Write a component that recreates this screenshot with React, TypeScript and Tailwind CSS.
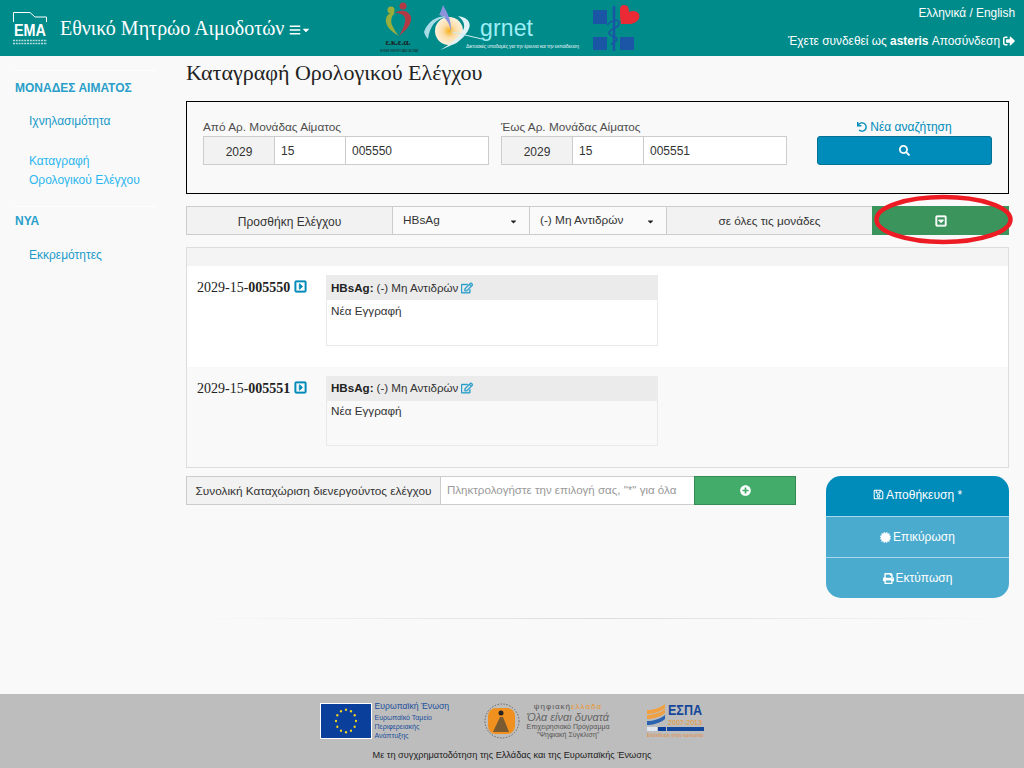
import { ReactNode } from "react";
import {
  FaBars,
  FaCaretDown,
  FaCertificate,
  FaPlusCircle,
  FaPrint,
  FaRegCaretSquareDown,
  FaRegCaretSquareRight,
  FaRegEdit,
  FaRegSave,
  FaSearch,
  FaSignOutAlt,
  FaUndo,
} from "react-icons/fa";

const EmaLogo = () => (
  <svg width="34" height="33" viewBox="0 0 34 33" className="shrink-0 overflow-visible">
    <path d="M0.500 10V0.500H17l5 4.500h11.500v5" fill="none" stroke="#fff" strokeWidth="1" />
    <text x="1" y="23.500" fontFamily="Liberation Sans" fontWeight="700" fontSize="16" fill="#fff" textLength="32" lengthAdjust="spacingAndGlyphs">
      EMA
    </text>
    <path d="M0 28.500h34M0 31.500h34" stroke="#d5ebeb" strokeWidth="1.500" strokeDasharray="2 0.800" opacity="0.85" />
  </svg>
);

const EkeaLogo = () => (
  <svg width="40" height="54" viewBox="0 0 40 54" className="shrink-0">
    <circle cx="11" cy="9" r="3.500" fill="#9aae3b" />
    <circle cx="23" cy="5" r="3.500" fill="#b23a45" />
    <path d="M19 35C10 30 5 24 6 18c1-5 5-7 9-6-4 3-5 9-2 14 2 4 4 7 6 9z" fill="#9aae3b" />
    <path d="M15 12c5-4 14-3 16 4 1 8-6 14-12 19 4-7 7-13 6-18-1-4-6-5-10-5z" fill="#b23a45" />
    <text x="18" y="44" textAnchor="middle" fontFamily="Liberation Serif" fontWeight="700" fontSize="9" fill="#1c1c1c" textLength="25">
      ε.κ.ε.α.
    </text>
    <text x="0" y="50.500" fontFamily="Liberation Sans" fontSize="4" fill="#1c3c3c" textLength="39">
      ΕΘΝΙΚΟ ΚΕΝΤΡΟ ΑΙΜΟΔΟΣΙΑΣ
    </text>
  </svg>
);

const GrnetLogo = () => (
  <svg width="158" height="50" viewBox="0 0 158 50" className="shrink-0">
    <defs>
      <radialGradient id="sun">
        <stop offset="0" stopColor="#f7b21e" />
        <stop offset="0.45" stopColor="#fbdca6" />
        <stop offset="1" stopColor="#fdf0dc" />
      </radialGradient>
    </defs>
    <circle cx="25" cy="28" r="14" fill="url(#sun)" />
    <path d="M19 2c3 6 9 14 8 27-1-10-7-16-12-17 2-3 3-7 4-10z" fill="#8b93dd" />
    <path d="M0 29c4-12 16-17 22-15C12 16 6 22 4 36 2 34 1 32 0 29z" fill="#a9dbe6" />
    <path d="M34 13c13 2 15 10 7 19-4 6-14 11-25 15 11-6 21-14 24-22 1-5-2-9-6-12z" fill="#dff2f5" />
    <path d="M28 29l30 7" stroke="#cdeaf0" strokeWidth="1" />
    <text x="56" y="33" fontFamily="Liberation Sans" fontSize="23" fill="#9eeef5" textLength="53">
      grnet
    </text>
    <text x="42" y="45" fontFamily="Liberation Sans" fontSize="5" fill="#e4f4f4" textLength="113">
      Δικτυακές υποδομές για την έρευνα και την εκπαίδευση
    </text>
  </svg>
);

const MinistryLogo = () => (
  <svg width="47" height="48" viewBox="0 0 47 48" className="shrink-0">
    <rect x="0" y="6" width="14" height="14" fill="#1a55a6" />
    <rect x="0" y="33" width="14" height="13" fill="#1a55a6" />
    <rect x="27" y="33" width="14" height="13" fill="#1a55a6" />
    <path d="M28 20c-1-5-1-10-1-14 0-4 2-5 4-5 4 0 5 3 5 7 4-2 8-1 10 2 2 5-3 9-8 10z" fill="#ea2a35" />
    <path d="M21 2v45" stroke="#1a55a6" strokeWidth="2.500" />
    <path d="M14 21c6-6 13-6 12-1-1 5-10 4-10 9 0 4 8 2 8 6s-6 2-5 6" fill="none" stroke="#1a55a6" strokeWidth="1.500" />
  </svg>
);

const EuFlag = () => {
  const stars = Array.from({ length: 12 }, (_, i) => {
    const a = (i * Math.PI) / 6;
    return [30 + 12 * Math.cos(a), 18 + 12 * Math.sin(a)];
  });
  return (
    <svg width="52" height="36" viewBox="0 0 60 36" preserveAspectRatio="none" className="shrink-0 border border-white">
      <rect width="60" height="36" fill="#0b3f9c" />
      {stars.map(([x, y], i) => (
        <circle key={i} cx={x} cy={y} r="1.300" fill="#f4d81c" />
      ))}
    </svg>
  );
};

const DigitalGreeceMark = () => (
  <svg width="36" height="36" viewBox="0 0 36 36" className="shrink-0">
    <circle cx="18" cy="18" r="17" fill="none" stroke="#666" strokeWidth="1" strokeDasharray="1.500 1.500" />
    <rect x="4" y="5" width="27" height="26" rx="8" fill="#f0901e" />
    <circle cx="17" cy="10" r="2.500" fill="#222" />
    <path d="M9 29l7-15h3l6 15z" fill="#7a5a30" />
  </svg>
);

const EspaMark = () => (
  <svg width="58" height="37" viewBox="0 0 58 37" className="shrink-0 overflow-visible">
    <path d="M0 8c6 0 13-2 18-6v4c-5 4-12 6-18 6z" fill="#f0a040" />
    <path d="M0 13c6 0 13-2 18-6v4c-5 4-12 6-18 6z" fill="#f0a040" />
    <path d="M0 19c6 0 13-2 18-6v4c-5 4-12 6-18 6z" fill="#2a63b0" />
    <text x="21" y="13" fontFamily="Liberation Sans" fontWeight="700" fontSize="14" fill="#15479a" textLength="34" lengthAdjust="spacingAndGlyphs">
      ΕΣΠΑ
    </text>
    <text x="21" y="23" fontFamily="Liberation Sans" fontSize="8" fill="#e8962c" textLength="34" lengthAdjust="spacingAndGlyphs">
      2007-2013
    </text>
    <rect x="0" y="25" width="10" height="4" fill="#dfe6ee" />
    <rect x="11" y="25" width="8" height="4" fill="#0b3f9c" />
    <rect x="20" y="25" width="37" height="4" fill="#15479a" />
    <text x="0" y="35" fontFamily="Liberation Sans" fontSize="4.500" fill="#e8862c" textLength="56">
      Επένδυση στην κοινωνία
    </text>
  </svg>
);

const Addon = ({ className, children }: { className: string; children: ReactNode }) => (
  <div className={`flex items-center justify-center bg-[#f2f2f2] border border-[#cccccc] text-[#333] h-[29px] pt-[2px] ${className}`}>
    {children}
  </div>
);

const Field = ({ value, className }: { value: string; className: string }) => (
  <input
    readOnly
    value={value}
    className={`h-[29px] bg-white border border-[#cccccc] px-[6px] text-[12px] text-[#333] outline-none ${className}`}
  />
);

const FakeSelect = ({ label }: { label: string }) => (
  <div className="flex items-center justify-between w-[137px] h-[29px] bg-[#fafafa] border border-[#cccccc] border-r-0 pl-[10px] pr-[11px] pt-[1px] text-[11.800px] text-[#333]">
    <span>{label}</span>
    <FaCaretDown className="text-[9px] text-[#222]" />
  </div>
);

const UnitRange = ({ label, code }: { label: string; code: string }) => (
  <div className="w-[286px]">
    <div className="text-[11.800px] leading-[18px] text-[#4d4d4d]">{label}</div>
    <div className="flex">
      <Addon className="w-[72px] text-[12px]">2029</Addon>
      <Field value="15" className="w-[71px] border-l-0" />
      <Field value={code} className="w-[143px] border-l-0" />
    </div>
  </div>
);

const ResultRow = ({ code, second }: { code: string; second?: boolean }) => (
  <div className={`flex h-[100.500px] pt-[9px] pl-[10px] ${second ? "bg-[#f9f9f9]" : "bg-white"}`}>
    <div className="w-[129px] flex items-start gap-[4px] font-['Liberation_Serif',serif] text-[14px] leading-[25px] text-[#222]">
      <span>
        2029-15-<b>{code}</b>
      </span>
      <FaRegCaretSquareRight stroke="currentColor" strokeWidth={28} className="mt-[5px] text-[13px] text-[#008cba]" />
    </div>
    <div className={`w-[332px] border border-[#e9e9e9] ${second ? "h-[70px]" : "h-[71px]"}`}>
      <div className="flex items-center h-[25px] -mx-px -mt-px bg-[#ebebeb] pl-[5px] text-[11.600px] text-[#333]">
        <b className="text-[#222]">HBsAg:</b>
        <span className="ml-[3px]">(-) Μη Αντιδρών</span>
        <FaRegEdit stroke="currentColor" strokeWidth={20} className="ml-[3px] text-[12px] text-[#2a9fc9]" />
      </div>
      <div className={`pl-[4px] text-[11.700px] leading-[18px] text-[#333] ${second ? "pt-[1px]" : "pt-[2px]"}`}>Νέα Εγγραφή</div>
    </div>
  </div>
);

const SideLink = ({ children, className }: { children: ReactNode; className: string }) => (
  <a className={`block pl-[29px] text-[12px] leading-[19.500px] ${className}`}>{children}</a>
);

export default function App() {
  return (
    <div className="flex flex-col min-h-screen h-[768px] overflow-hidden bg-[#f9f9f9] font-['Liberation_Sans',Arial,sans-serif]">
      {/* Header */}
      <header className="flex items-center justify-between h-[56px] shrink-0 bg-[#008b8b] pl-[13px] pr-[9px] text-white">
        <div className="flex items-center w-[367px]">
          <EmaLogo />
          <span className="ml-[13px] font-['Liberation_Serif',serif] text-[20px]">Εθνικό Μητρώο Αιμοδοτών</span>
          <FaBars className="ml-[5px] mt-[3px] text-[12px]" />
          <FaCaretDown className="mt-[3px] text-[10px]" />
        </div>
        <div className="flex items-center flex-1">
          <EkeaLogo />
          <div className="ml-[4px]">
            <GrnetLogo />
          </div>
          <div className="ml-[11px]">
            <MinistryLogo />
          </div>
        </div>
        <div className="flex flex-col items-end gap-[11px] text-[11.900px] leading-[17px] pb-[2px]">
          <span>Ελληνικά / English</span>
          <span className="flex items-center">
            Έχετε συνδεθεί ως&nbsp;<b>asteris</b>&nbsp;Αποσύνδεση
            <FaSignOutAlt className="ml-[3px] text-[12px]" />
          </span>
        </div>
      </header>

      <div className="flex flex-1">
        {/* Sidebar */}
        <aside className="w-[186px] shrink-0 pt-[14px]">
          <div className="ml-[15px] w-[140px] border-t border-white" />
          <div className="ml-[15px] mt-[8px] text-[12px] font-bold leading-[18px] text-[#2a9fc9]">ΜΟΝΑΔΕΣ ΑΙΜΑΤΟΣ</div>
          <SideLink className="mt-[15px] text-[#1a9ac9]">Ιχνηλασιμότητα</SideLink>
          <SideLink className="mt-[20px] text-[#2bb6ef]">
            Καταγραφή
            <br />
            Ορολογικού Ελέγχου
          </SideLink>
          <div className="ml-[15px] mt-[15px] w-[140px] border-t border-white" />
          <div className="ml-[15px] mt-[5px] text-[12px] font-bold leading-[18px] text-[#2a9fc9]">ΝΥΑ</div>
          <SideLink className="mt-[16px] text-[#1a9ac9]">Εκκρεμότητες</SideLink>
        </aside>

        {/* Main */}
        <main className="w-[823px] shrink-0">
          <h1 className="font-['Liberation_Serif',serif] text-[22px] leading-[26px] pt-[4px] pb-[1px] text-[#222]">
            Καταγραφή Ορολογικού Ελέγχου
          </h1>

          <section className="flex h-[93px] mt-[14px] border border-black pl-[16px] pt-[16px]">
            <UnitRange label="Από Αρ. Μονάδας Αίματος" code="005550" />
            <div className="ml-[12px]">
              <UnitRange label="Έως Αρ. Μονάδας Αίματος" code="005551" />
            </div>
            <div className="ml-[30px] w-[175px]">
              <div className="flex items-center justify-center gap-[3px] text-[12px] leading-[18px] text-[#008cba]">
                <FaUndo className="text-[10px]" />
                Νέα αναζήτηση
              </div>
              <button className="flex items-center justify-center w-full h-[29px] rounded-[3px] bg-[#008cba] border border-[#007095] text-white">
                <FaSearch className="text-[11px]" />
              </button>
            </div>
          </section>

          <div className="relative flex mt-[12px]">
            <Addon className="w-[206px] border-r-0 text-[12px]">Προσθήκη Ελέγχου</Addon>
            <FakeSelect label="HBsAg" />
            <FakeSelect label="(-) Μη Αντιδρών" />
            <Addon className="w-[206px] border-r-0 text-[11.800px]">σε όλες τις μονάδες</Addon>
            <button className="flex items-center justify-center w-[137px] h-[29px] bg-[#3a945b] text-white">
              <FaRegCaretSquareDown stroke="currentColor" strokeWidth={30} className="text-[12px]" />
            </button>
            {/* red marker drawn over the screenshot */}
            <svg width="147" height="56" viewBox="0 0 147 56" className="absolute left-[684px] top-[-14px]">
              <ellipse cx="73.500" cy="27.500" rx="67" ry="22.500" fill="none" stroke="#ed1c24" strokeWidth="4.500" />
            </svg>
          </div>

          <section className="h-[221px] mt-[12px] border border-[#dddddd]">
            <div className="h-[18px] bg-[#f4f4f4]" />
            <ResultRow code="005550" />
            <ResultRow code="005551" second />
          </section>

          <div className="flex items-start mt-[8px]">
            <div className="flex w-[610px]">
              <Addon className="w-[255px] text-[11.800px]">
                <span>Συνολική Καταχώριση διενεργούντος ελέγχου</span>
              </Addon>
              <input
                readOnly
                placeholder='Πληκτρολογήστε την επιλογή σας, "*" για όλα'
                className="w-[253px] h-[29px] bg-white border-y border-[#cccccc] px-[6px] pb-[1px] text-[11.550px] outline-none placeholder:text-[#999]"
              />
              <button className="flex items-center justify-center w-[102px] h-[29px] bg-[#43ac6a] border border-[#368a55] text-white">
                <FaPlusCircle className="text-[11px]" />
              </button>
            </div>
            <div className="ml-[30px] w-[183px] flex flex-col overflow-hidden rounded-[15px] text-white text-[12px]">
              <button className="flex items-center justify-center gap-[2px] h-[40px] pb-[3px] bg-[#008cba]">
                <FaRegSave className="text-[11px]" />
                Αποθήκευση *
              </button>
              <button className="flex items-center justify-center gap-[2px] h-[41px] bg-[#4aabce] border-t border-[#a9d9ea]">
                <FaCertificate className="text-[11px]" />
                Επικύρωση
              </button>
              <button className="flex items-center justify-center gap-[2px] h-[41px] bg-[#4aabce] border-t border-[#a9d9ea]">
                <FaPrint className="text-[11px]" />
                Εκτύπωση
              </button>
            </div>
          </div>

          <div className="mt-[20px] h-px bg-gradient-to-r from-transparent via-[#dddddd] to-transparent" />
        </main>
      </div>

      {/* Footer */}
      <footer className="flex flex-col items-center h-[74px] shrink-0 bg-[#bdbdbd] pt-[8px]">
        <div className="flex items-center h-[37px]">
          <EuFlag />
          <div className="ml-[3px] w-[78px] text-[#1c4f9c]">
            <div className="text-[8.700px] leading-[10px] whitespace-nowrap">Ευρωπαϊκή Ένωση</div>
            <div className="text-[7px] leading-[9px] mt-[2px]">
              Ευρωπαϊκό Ταμείο
              <br />
              Περιφερειακής
              <br />
              Ανάπτυξης
            </div>
          </div>
          <div className="ml-[31px]">
            <DigitalGreeceMark />
          </div>
          <div className="ml-[3px] w-[91px] text-center text-[#555] whitespace-nowrap">
            <div className="text-[8px] leading-[10px] tracking-[1px]">
              ψηφιακή<span className="text-[#e8962c]">ελλάδα</span>
            </div>
            <div className="text-[11px] leading-[11px] font-light italic text-[#666]">Όλα είναι δυνατά</div>
            <div className="text-[7px] leading-[8px]">
              Επιχειρησιακό Πρόγραμμα
              <br />
              "Ψηφιακή Σύγκλιση"
            </div>
          </div>
          <div className="ml-[33px]">
            <EspaMark />
          </div>
        </div>
        <p className="mt-[10px] text-[9.200px] leading-[12px] text-[#222]">Με τη συγχρηματοδότηση της Ελλάδας και της Ευρωπαϊκής Ένωσης</p>
      </footer>
    </div>
  );
}
